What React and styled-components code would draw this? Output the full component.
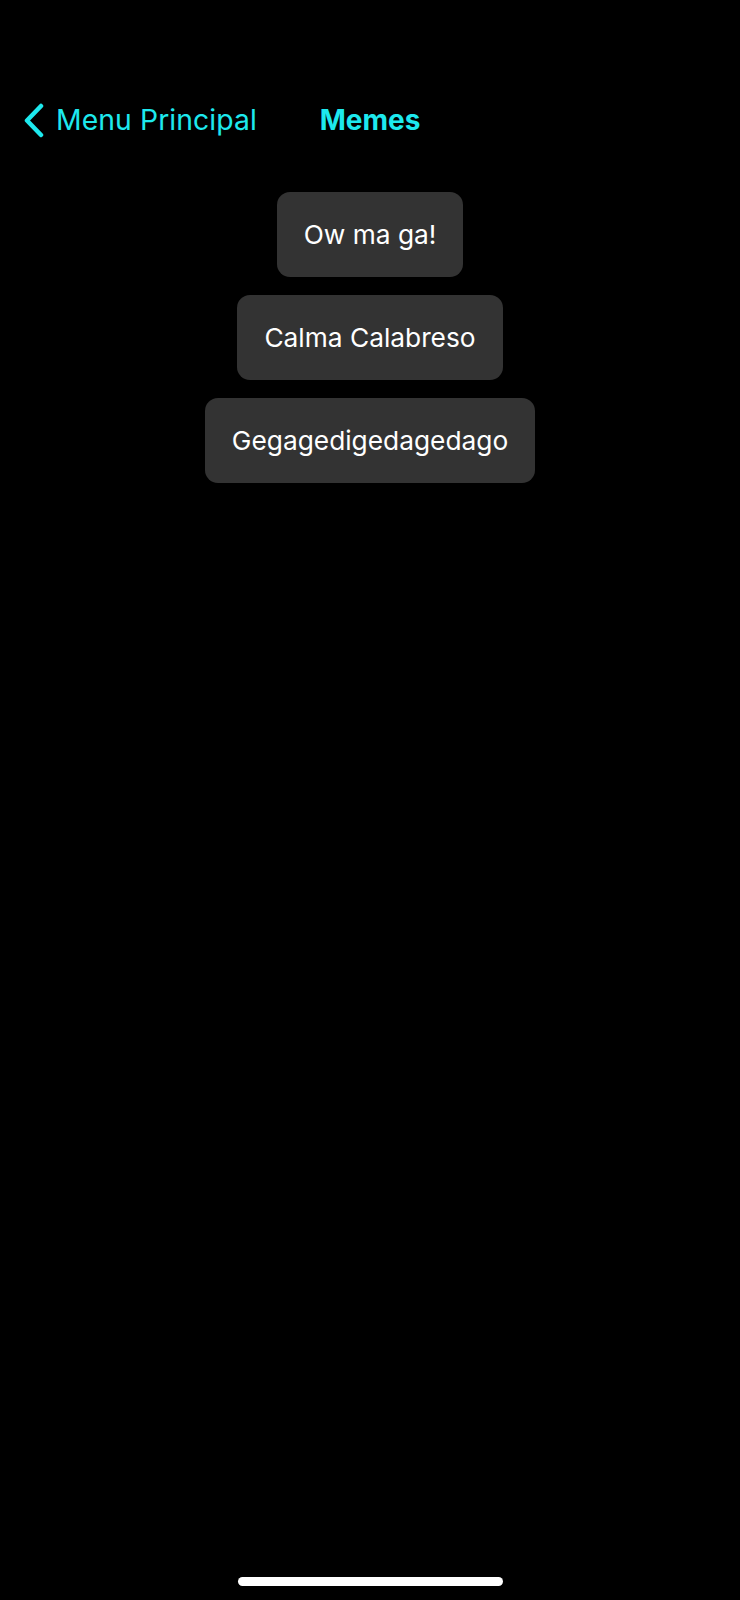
import styled, { createGlobalStyle } from "styled-components";

const GlobalStyle = createGlobalStyle`
  html, body {
    margin: 0;
    padding: 0;
    background: #000;
  }
  body {
    font-family: Inter, "Noto Sans", sans-serif;
  }
`;

const Screen = styled.div`
  width: 740px;
  height: 1600px;
  background: #000;
  display: flex;
  flex-direction: column;
  box-sizing: border-box;
`;

const NavBar = styled.div`
  display: grid;
  grid-template-columns: 1fr auto 1fr;
  align-items: center;
  height: 48px;
  margin-top: 96px;
  padding: 0 23px;
`;

const BackButton = styled.div`
  display: flex;
  align-items: center;
  gap: 12px;
  color: #1de9ee;
  font-size: 28.3px;
  letter-spacing: 0.1px;
`;

const Title = styled.div`
  color: #1de9ee;
  font-size: 28px;
  font-weight: 700;
`;

const List = styled.div`
  display: flex;
  flex-direction: column;
  align-items: center;
  gap: 18px;
  margin-top: 48px;
`;

const MemeButton = styled.div`
  background: #333333;
  color: #fff;
  font-size: 26.3px;
  height: 85px;
  padding: 0 27px;
  border-radius: 13px;
  display: flex;
  align-items: center;
  justify-content: center;
`;

const HomeIndicator = styled.div`
  margin: auto auto 14px;
  width: 265px;
  height: 9px;
  border-radius: 5px;
  background: #fff;
`;

const memes = ["Ow ma ga!", "Calma Calabreso", "Gegagedigedagedago"];

export default function App() {
  return (
    <Screen>
      <GlobalStyle />
      <NavBar>
        <BackButton>
          <svg width="21" height="35" viewBox="0 0 21 35" fill="none">
            <path
              d="M18 3 L4 17.5 L18 32"
              stroke="#1de9ee"
              strokeWidth="4.5"
              strokeLinecap="round"
              strokeLinejoin="round"
            />
          </svg>
          Menu Principal
        </BackButton>
        <Title>Memes</Title>
        <div />
      </NavBar>
      <List>
        {memes.map((m) => (
          <MemeButton key={m}>{m}</MemeButton>
        ))}
      </List>
      <HomeIndicator />
    </Screen>
  );
}
